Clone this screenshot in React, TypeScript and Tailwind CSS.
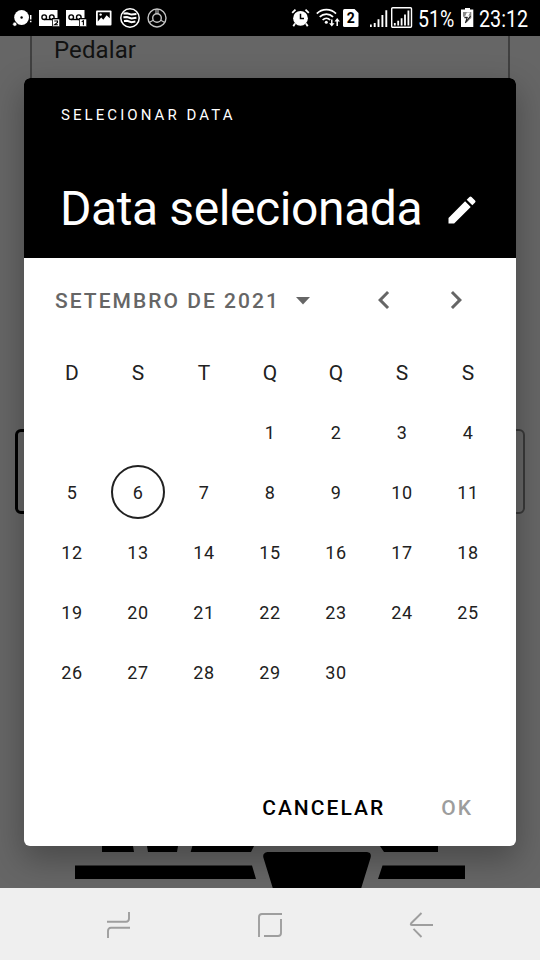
import type { ReactNode } from "react";

const weekdays = ["D", "S", "T", "Q", "Q", "S", "S"];
const leadingBlanks = 3;
const today = 6;
const days = Array.from({ length: 30 }, (_, i) => i + 1);

function Svg({ w, h, className = "", children }: { w: number; h: number; className?: string; children: ReactNode }) {
  return (
    <svg width={w} height={h} viewBox={`0 0 ${w} ${h}`} className={`block shrink-0 ${className}`} fill="none">
      {children}
    </svg>
  );
}

function Voicemail({ sim }: { sim: string }) {
  return (
    <Svg w={22} h={18}>
      <path d="M0 1H18.5V9H13V17H0Z" fill="#fff" />
      <g stroke="#000" strokeWidth="1.4">
        <circle cx="5.2" cy="8.2" r="2.3" />
        <circle cx="12.8" cy="8.2" r="2.3" />
        <path d="M5.2 10.5H12.8" />
      </g>
      <rect x="13.5" y="10" width="7.2" height="7.6" fill="#fff" stroke="#000" strokeWidth="0.6" />
      {sim === "2" ? (
        <path d="M15.3 12H18.5V13.4L15.6 15.7H18.9" stroke="#000" strokeWidth="1.1" />
      ) : (
        <path d="M15.7 12.8L17.4 11.8V16.2" stroke="#000" strokeWidth="1.1" />
      )}
    </Svg>
  );
}

function StatusBar() {
  return (
    <header className="flex h-9 w-full items-center bg-black pl-3 text-white">
      <Svg w={20} h={18}>
        <circle cx="9.6" cy="8.5" r="7.4" fill="#fff" />
        <circle cx="9.6" cy="8.5" r="1.2" fill="#000" />
        <circle cx="2.8" cy="15.2" r="2.1" fill="#fff" stroke="#000" strokeWidth="0.7" />
        <path d="M18.7 6V10.5M18.7 11.8V13.3" stroke="#fff" strokeWidth="1.5" />
      </Svg>
      <div className="ml-[7px] flex items-center gap-[5px]">
        <Voicemail sim="2" />
        <Voicemail sim="1" />
      </div>
      <Svg w={16} h={16} className="ml-[8px]">
        <rect x="0" y="0.5" width="15.5" height="15" rx="1" fill="#fff" />
        <path d="M1.8 2.2H13.8V8.2L10.6 5.3L7.3 9.8L5.2 7.5L1.8 11.5Z" fill="#000" />
        <circle cx="4.6" cy="4.6" r="1.2" fill="#fff" />
      </Svg>
      <Svg w={22} h={22} className="ml-[7px]">
        <circle cx="11" cy="11" r="9.2" stroke="#fff" strokeWidth="1.5" />
        <path
          d="M4.4 6.4L8 6.2L12.5 7.6L17.4 6.9M4.4 10.2L8 10L12.5 11.4L17.4 10.7M5 14L8 13.8L12.5 15.2L16.4 14.6"
          stroke="#fff"
          strokeWidth="2"
        />
      </Svg>
      <Svg w={20} h={20} className="ml-[6px]">
        <g stroke="#c4c4c4" strokeWidth="1.4">
          <circle cx="10" cy="10" r="9" />
          <circle cx="10" cy="10" r="4.3" />
          <path d="M9 1V5.7M11 1V5.7M2.2 14.5L6.2 12.2M17.8 14.5L13.8 12.2" strokeWidth="1.1" />
        </g>
      </Svg>

      <Svg w={20} h={20} className="ml-[124px]">
        <circle cx="9.5" cy="10.3" r="7.4" fill="#fff" />
        <path d="M9.5 5.7V10.5H13" stroke="#000" strokeWidth="1.5" />
        <path d="M1.2 4.8L4.5 1.6M14.5 1.6L17.8 4.8M4 15.5L2.3 18.3M15 15.5L16.7 18.3" stroke="#fff" strokeWidth="1.8" />
      </Svg>
      <Svg w={25} h={20} className="ml-[5px]">
        <g stroke="#fff" strokeWidth="1.7">
          <path d="M0.8 5.6C6 0.3 14.8 0.3 20 5.6" />
          <path d="M3.7 8.9C7.5 5.2 13.3 5.2 17.1 8.9" />
          <path d="M6.6 12C8.8 9.9 12 9.9 14.2 12" />
          <path d="M15.8 11.5V16.5M21.2 18V12" strokeWidth="1.5" />
        </g>
        <circle cx="10.3" cy="14.2" r="1.5" fill="#fff" />
        <path d="M13.1 15.2H18.5L15.8 18.6ZM18.5 13.5H23.9L21.2 10.1Z" fill="#fff" />
      </Svg>
      <Svg w={16} h={18} className="ml-[2px]">
        <path d="M1.5 0H11.5L15.5 4V16.5Q15.5 18 14 18H1.5Q0 18 0 16.5V1.5Q0 0 1.5 0Z" fill="#fff" />
        <text x="7.7" y="14.2" fontSize="14" fontWeight="700" fontFamily="Roboto, sans-serif" textAnchor="middle" fill="#000">2</text>
      </Svg>
      <Svg w={18} h={19} className="ml-[11px]">
        <path d="M0.8 18V15.5M4.7 18V14M8.5 18V10.2M12.4 18V6M16.3 18V1.2" stroke="#fff" strokeWidth="1.9" />
      </Svg>
      <Svg w={22} h={22} className="ml-[3px]">
        <rect x="0.7" y="0.7" width="19.8" height="19.6" rx="1" stroke="#fff" strokeWidth="1.4" />
        <path d="M3.8 18.4V16M7.2 18.4V13.8M10.6 18.4V11.2M14 18.4V7.5M17.4 18.4V3.6" stroke="#fff" strokeWidth="1.8" />
      </Svg>
      <span className="ml-[5px] w-[37px] whitespace-nowrap pt-0.5">
        <span className="inline-block origin-left scale-x-[0.83] text-[23.5px] leading-9">51%</span>
      </span>
      <Svg w={13} h={19} className="mb-0.5 ml-[6px]">
        <path d="M4 0H9V1.5H12.3V19H0V1.5H4Z" fill="#fff" />
        <path d="M2 4H10.3V10L6 14V8.7H2Z" fill="#888" />
        <path d="M5.8 4.5L4 8.6H6.6L5 14.5L9.6 7.8H7.3L9.2 4.5Z" fill="#fff" />
        <path d="M9.6 7.8L4.4 14.8L6.1 9.6H3.4" stroke="#222" strokeWidth="1.1" />
      </Svg>
      <span className="ml-[5px] w-[52px] whitespace-nowrap pt-0.5">
        <span className="inline-block origin-left scale-x-[0.84] text-[23.5px] leading-9">23:12</span>
      </span>
    </header>
  );
}

function PageBehind() {
  return (
    <main className="flex h-[852px] w-full flex-col overflow-hidden bg-[#666666]">
      <div className="mx-[30px] h-[66px] border-x-2 border-[#404040] pl-[22px] text-[24px] leading-7 tracking-[0.1px] text-[#121212]">
        Pedalar
      </div>
      <div className="mt-[327px] flex h-[85px] justify-between px-[15px]">
        <div className="w-[240px] rounded-md border-[3px] border-black" />
        <div className="w-[240px] rounded-md border-2 border-[#393939]" />
      </div>
      <Svg w={540} h={48} className="mt-auto">
        <path
          d="M102 0H132L134 12H102ZM146 0L148 12H177L179 0ZM194 0L190.7 12H251L257 0ZM75 25.5H252L256 39H75ZM376 0L384 12H438V0ZM382.5 25.5H465V39H378ZM267.5 12H367Q372 12.5 370.5 18L360 52H274L263.5 18Q262 13 267.5 12Z"
          fill="#000"
        />
      </Svg>
    </main>
  );
}

function DatePicker() {
  return (
    <section
      role="dialog"
      className="absolute left-6 top-[78px] flex h-[768px] w-[492px] flex-col overflow-hidden rounded-md bg-white shadow-[0_12px_32px_2px_rgba(0,0,0,0.28)]"
    >
      <div className="flex h-[180px] flex-col bg-black pl-9 pr-9 text-white">
        <p className="ml-px mt-[27px] text-[15px] leading-5 tracking-[3.07px]">SELECIONAR DATA</p>
        <div className="mt-[54px] flex items-start justify-between">
          <h1 className="whitespace-nowrap text-[48px] leading-[60px] tracking-[-0.4px]">Data selecionada</h1>
          <svg width="36" height="36" viewBox="0 0 24 24" className="mt-[13px] shrink-0" fill="#fff">
            <path d="M3 17.25V21h3.75L17.81 9.94l-3.75-3.75L3 17.25zM20.71 7.04a1 1 0 0 0 0-1.41l-2.34-2.34a1 1 0 0 0-1.41 0l-1.83 1.83 3.75 3.75 1.83-1.83z" />
          </svg>
        </div>
      </div>

      <div className="flex h-[84px] items-center pl-[31px] text-[#666]">
        <button className="flex w-[270px] items-center whitespace-nowrap text-[21px] font-medium tracking-[2.03px]">
          <span className="pt-[3px]">SETEMBRO DE 2021</span>
          <Svg w={14} h={8} className="ml-[16px] mt-0.5">
            <path d="M0 0H14L7 7.5Z" fill="#666" />
          </Svg>
        </button>
        <button className="ml-[41px] flex size-9 items-center justify-center" aria-label="Anterior">
          <svg width="36" height="36" viewBox="0 0 24 24" fill="#666">
            <path d="M15.41 7.41L14 6l-6 6 6 6 1.41-1.41L10.83 12z" />
          </svg>
        </button>
        <button className="ml-9 flex size-9 items-center justify-center" aria-label="Seguinte">
          <svg width="36" height="36" viewBox="0 0 24 24" fill="#666">
            <path d="M10 6L8.59 7.41 13.17 12l-4.58 4.59L10 18l6-6z" />
          </svg>
        </button>
      </div>

      <div className="mx-[15px] grid auto-rows-[60px] grid-cols-7 text-[18px] tracking-[0.6px] text-[#212121]">
        {weekdays.map((d, i) => (
          <div key={i} className="flex items-center justify-center pt-[3px] text-[21px] tracking-normal">{d}</div>
        ))}
        {Array.from({ length: leadingBlanks }, (_, i) => (
          <div key={`blank-${i}`} />
        ))}
        {days.map((d) => (
          <div key={d} className="flex items-center justify-center">
            <span
              className={
                d === today
                  ? "flex size-[54px] items-center justify-center rounded-full border-2 border-[#212121]"
                  : "flex size-[54px] items-center justify-center"
              }
            >
              {d}
            </span>
          </div>
        ))}
      </div>

      <div className="mt-auto flex h-[74px] items-center justify-end pr-[43px] text-[21px] font-medium tracking-[2.03px]">
        <button className="text-black">CANCELAR</button>
        <button className="ml-14 text-[#9d9d9d]">OK</button>
      </div>
    </section>
  );
}

function NavBar() {
  return (
    <nav className="flex h-[72px] w-full items-center bg-[#efefef] pl-[106px] pt-0.5">
      <Svg w={26} h={28}>
        <path d="M1 10.7H20Q23 10.7 23 7.5V1M2 27V20Q2 16.8 5 16.8H24" stroke="#9e9e9e" strokeWidth="1.9" />
      </Svg>
      <Svg w={26} h={26} className="ml-[125px]">
        <path d="M2 25V5Q2 2 5 2H25M24 7V21Q24 24 21 24H7" stroke="#9e9e9e" strokeWidth="1.9" />
      </Svg>
      <Svg w={26} h={28} className="ml-[126px]">
        <path d="M12.5 2L2.2 12.2Q1 14 3 14H24M4.5 17.8L12.5 26" stroke="#9e9e9e" strokeWidth="1.9" />
      </Svg>
    </nav>
  );
}

export default function App() {
  return (
    <div className="relative flex h-[960px] w-[540px] flex-col overflow-hidden font-[Roboto,sans-serif]">
      <StatusBar />
      <PageBehind />
      <DatePicker />
      <div className="z-10">
        <NavBar />
      </div>
    </div>
  );
}
